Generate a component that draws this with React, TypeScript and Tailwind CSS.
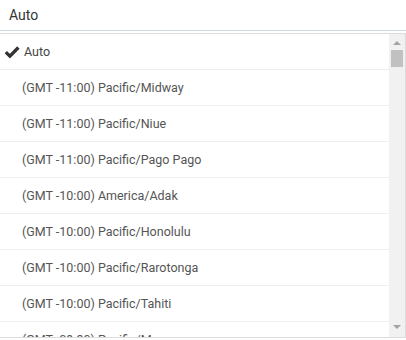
const zones = [
  "(GMT -11:00) Pacific/Midway",
  "(GMT -11:00) Pacific/Niue",
  "(GMT -11:00) Pacific/Pago Pago",
  "(GMT -10:00) America/Adak",
  "(GMT -10:00) Pacific/Honolulu",
  "(GMT -10:00) Pacific/Rarotonga",
  "(GMT -10:00) Pacific/Tahiti",
  "(GMT -09:30) Pacific/Marquesas",
];

function Check() {
  return (
    <svg width="16" height="13" viewBox="0 0 16 13" className="absolute left-[4px] top-1/2 -translate-y-1/2">
      <path d="M1.8 6.6 L5.9 10.6 L14.4 2" fill="none" stroke="#333" strokeWidth="3.3" strokeLinejoin="miter" />
    </svg>
  );
}

export default function App() {
  return (
    <div className="h-[340px] w-[406px] overflow-hidden bg-white font-['Roboto',sans-serif]">
      <div className="flex h-[30px] items-center px-[9px] text-[14px] text-[#333]">Auto</div>
      <div className="h-px bg-[#cfd8dc]" />
      <div className="mt-[2px] flex h-[305px] border-y border-r border-[#dcdcdc]">
        <ul className="flex-1 overflow-hidden">
          <li className="relative flex h-[36px] items-center border-b border-[#eee] pl-[24px] pt-px text-[12.5px] text-[#444]">
            <Check />
            Auto
          </li>
          {zones.map((z) => (
            <li key={z} className="flex h-[36px] items-center border-b border-[#eee] pl-[22px] pt-px text-[12.5px] text-[#555]">
              {z}
            </li>
          ))}
        </ul>
        <div className="flex w-[16px] flex-col items-center bg-[#f1f1f1]">
          <div className="mt-[7px] h-0 w-0 border-x-[4px] border-b-[4px] border-x-transparent border-b-[#a3a3a3]" />
          <div className="mt-[5px] h-[17px] w-[12px] bg-[#c1c1c1]" />
          <div className="flex-1" />
          <div className="mb-[8px] h-0 w-0 border-x-[4px] border-t-[4px] border-x-transparent border-t-[#a3a3a3]" />
        </div>
      </div>
    </div>
  );
}
